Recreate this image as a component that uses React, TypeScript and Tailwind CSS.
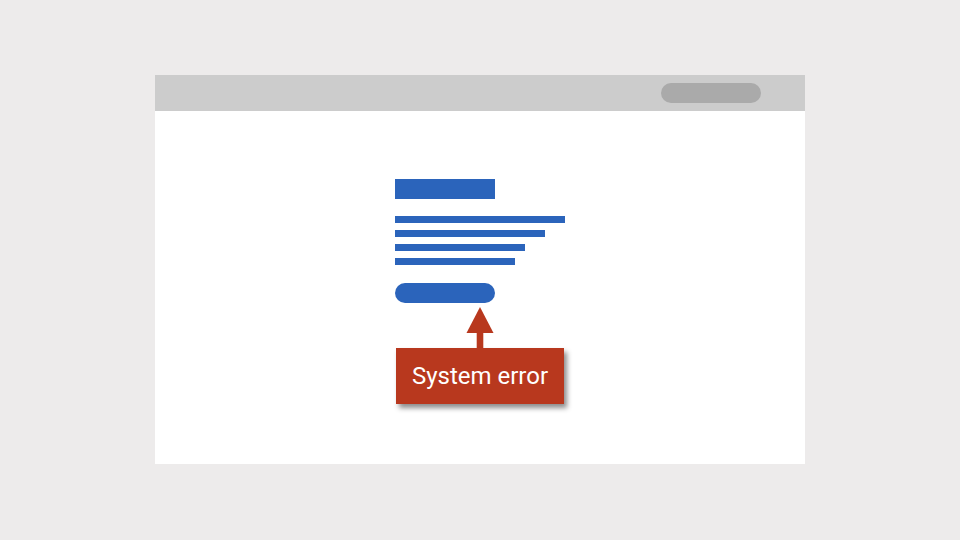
export default function App() {
  return (
    <div className="flex h-[540px] w-[960px] justify-center bg-[#edebeb] pt-[75px] font-['Roboto',sans-serif]">
      <div className="flex h-[389px] w-[650px] flex-col bg-white">
        <div className="flex h-[36px] items-center justify-end bg-[#cccccc] pr-[44px]">
          <div className="h-[20px] w-[100px] rounded-full bg-[#aaaaaa]" />
        </div>
        <div className="flex flex-1 justify-center pt-[68px]">
          <div className="flex w-[170px] flex-col">
            <div className="h-[20px] w-[100px] bg-[#2b64bb]" />
            <div className="mt-[17px] flex flex-col gap-[7px]">
              <div className="h-[7px] w-[170px] bg-[#2b64bb]" />
              <div className="h-[7px] w-[150px] bg-[#2b64bb]" />
              <div className="h-[7px] w-[130px] bg-[#2b64bb]" />
              <div className="h-[7px] w-[120px] bg-[#2b64bb]" />
            </div>
            <div className="mt-[18px] h-[20px] w-[100px] rounded-full bg-[#2b64bb]" />
            <div className="ml-px mt-[4px] flex w-[168px] flex-col items-center">
              <svg width="28" height="41" viewBox="0 0 28 41" className="block">
                <polygon points="14,0 27.5,26 0.5,26" fill="#b8381e" />
                <rect x="10.7" y="25" width="6.6" height="16" fill="#b8381e" />
              </svg>
              <div className="flex h-[56px] w-[168px] items-center justify-center bg-[#b8381e] text-[24px] text-white shadow-[3px_4px_5px_rgba(0,0,0,0.45)]">
                System error
              </div>
            </div>
          </div>
        </div>
      </div>
    </div>
  );
}
